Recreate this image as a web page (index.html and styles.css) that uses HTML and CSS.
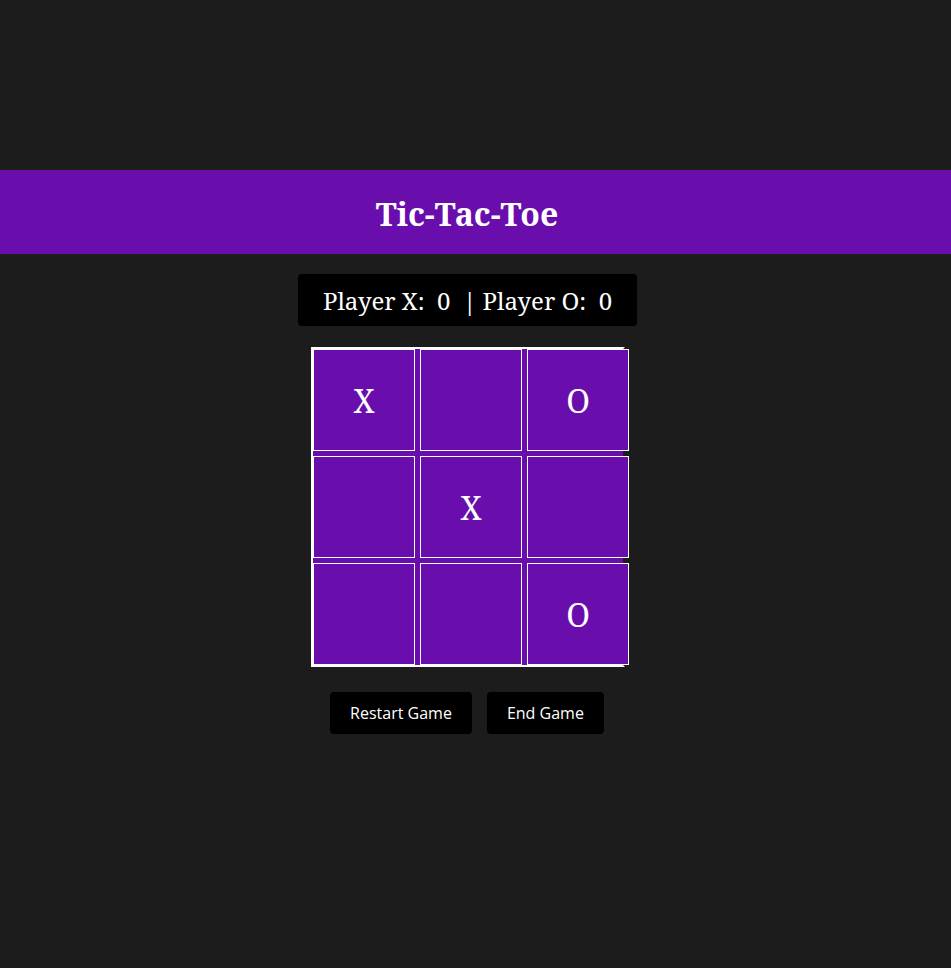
FILE: index.html
```html
<!DOCTYPE html>
<html lang="en">
<head>
<meta charset="utf-8">
<title>Tic-Tac-Toe</title>
<link rel="stylesheet" href="styles.css">
</head>
<body>
  <header class="title-bar">
    <h1 class="title">Tic-Tac-Toe</h1>
  </header>
  <main class="game">
    <div class="score">Player X:&nbsp; 0 &nbsp;| Player O:&nbsp; 0</div>
    <div class="board">
      <div class="cell">X</div>
      <div class="cell"></div>
      <div class="cell">O</div>
      <div class="cell"></div>
      <div class="cell">X</div>
      <div class="cell"></div>
      <div class="cell"></div>
      <div class="cell"></div>
      <div class="cell">O</div>
    </div>
    <div class="actions">
      <button class="btn">Restart Game</button>
      <button class="btn">End Game</button>
    </div>
  </main>
</body>
</html>
```

FILE: styles.css
```css
html, body {
  margin: 0;
  padding: 0;
  background: #1c1c1c;
  color: #ffffff;
  font-family: "Noto Serif", "DejaVu Serif", serif;
}

body {
  padding-top: 170px;
}

.title-bar {
  background: #6a0dad;
  height: 84px;
  padding-right: 17px;
  display: flex;
  align-items: center;
  justify-content: center;
}

.title {
  margin: 2px 0 0;
  font-size: 32px;
  font-weight: 700;
  color: #ffffff;
}

.game {
  padding-right: 17px;
  display: flex;
  flex-direction: column;
  align-items: center;
}

.score {
  margin-top: 20px;
  margin-left: 1px;
  background: #000000;
  border-radius: 4px;
  padding: 0 25px;
  height: 52px;
  display: flex;
  align-items: center;
  font-size: 24px;
  white-space: pre;
}

.board {
  margin-top: 21px;
  margin-left: 2px;
  width: 310px;
  height: 316px;
  background: #6a0dad;
  border: 2px solid #ffffff;
  border-right-color: #1c1c1c;
  display: grid;
  grid-template-columns: repeat(3, 102px);
  grid-template-rows: repeat(3, 102px);
  gap: 5px;
}

.cell {
  box-sizing: border-box;
  width: 102px;
  height: 102px;
  border: 1px solid #ffffff;
  background: #6a0dad;
  display: flex;
  align-items: center;
  justify-content: center;
  font-size: 32px;
  color: #ffffff;
}

.actions {
  margin-top: 25px;
  display: flex;
  gap: 15px;
}

.btn {
  font-family: "Open Sans", "Noto Sans", sans-serif;
  font-size: 16px;
  color: #ffffff;
  background: #000000;
  border: none;
  border-radius: 4px;
  height: 42px;
  padding: 0 20px;
}
```
